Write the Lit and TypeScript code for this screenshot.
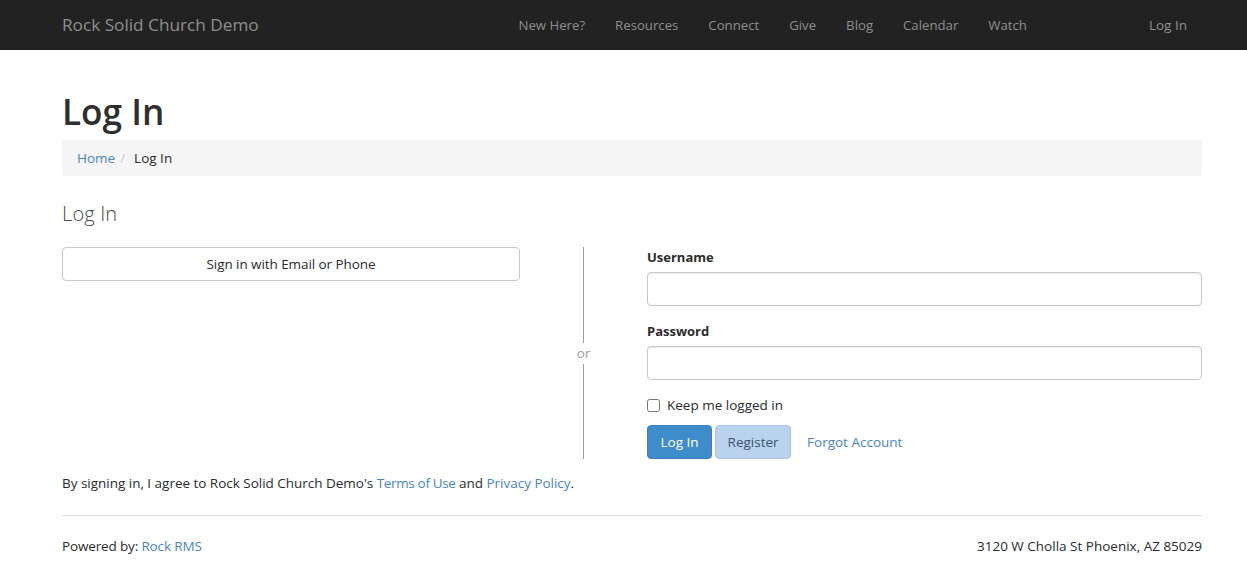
import { css, html, LitElement } from "lit";
import { customElement } from "lit/decorators.js";

const NAV = ["New Here?", "Resources", "Connect", "Give", "Blog", "Calendar", "Watch"];

@customElement("app-root")
export class AppRoot extends LitElement {

    static styles = css`
        :host {
            display: block;
            font-family: "Open Sans", sans-serif;
            font-size: 13.5px;
            line-height: 20px;
            color: #2b2b2b;
            background: #fff;
        }

        a {
            color: #4a84c4;
            text-decoration: none;
        }

        .navbar {
            height: 50px;
            background: #222;
            display: flex;
            align-items: center;
            padding: 0 45px 0 62px;
        }

        .brand {
            font-size: 17.2px;
            color: #8f8f8f;
            flex: 1;
        }

        .nav {
            display: flex;
            gap: 30px;
            font-size: 13.2px;
        }

        .nav a {
            color: #8f8f8f;
        }

        .nav-login {
            color: #8f8f8f;
            margin-left: 122px;
            padding-right: 15px;
        }

        .page {
            padding: 0 45px 0 62px;
        }

        h1 {
            margin: 0;
            padding-top: 39px;
            font-size: 35.2px;
            line-height: 44px;
            font-weight: 600;
            color: #2f2f2f;
        }

        .breadcrumb {
            margin-top: 7px;
            height: 36px;
            background: #f5f5f5;
            border-radius: 4px;
            display: flex;
            align-items: center;
            padding: 0 15px;
        }

        .breadcrumb .sep {
            color: #ccc;
            margin: 0 9px 0 5px;
        }

        h2 {
            margin: 24px 0 0;
            font-size: 20px;
            line-height: 28px;
            font-weight: 300;
            letter-spacing: 0.15px;
            color: #4a4a4a;
        }

        .columns {
            margin-top: 19px;
            display: grid;
            grid-template-columns: 458px 127px 555px;
            height: 212px;
        }

        .sso {
            height: 34px;
            box-sizing: border-box;
            border: 1px solid #c8c8c8;
            border-radius: 4px;
            display: flex;
            align-items: center;
            justify-content: center;
            letter-spacing: -0.07px;
        }

        .divider {
            display: flex;
            flex-direction: column;
            align-items: center;
            color: #9d9d9d;
        }

        .divider i {
            flex: 1;
            width: 1px;
            background: #9d9d9d;
        }

        .divider span {
            padding: 0 0 1px;
            height: 20px;
        }

        label {
            display: block;
            font-size: 13px;
            font-weight: 700;
        }

        .field {
            margin-bottom: 15px;
        }

        .field input {
            display: block;
            box-sizing: border-box;
            width: 100%;
            height: 34px;
            margin-top: 5px;
            border: 1px solid #c8c8c8;
            border-radius: 4px;
            box-shadow: inset 0 1px 1px rgba(0, 0, 0, 0.075);
        }

        .check {
            display: flex;
            align-items: center;
            gap: 7px;
        }

        .check input {
            width: 13px;
            height: 13px;
            margin: 0;
        }

        .actions {
            display: flex;
            align-items: center;
            margin-top: 10px;
        }

        .btn {
            box-sizing: border-box;
            height: 34px;
            display: flex;
            align-items: center;
            padding: 0 12.5px;
            border-radius: 4px;
            border: 1px solid #3a7fc0;
            background: #3f8ccb;
            color: #fff;
            font-weight: 500;
        }

        .btn.secondary {
            margin-left: 3px;
            padding: 0 11.5px;
            background: #bad3ec;
            border-color: #a6c4e2;
            color: #37536f;
            font-weight: 400;
        }

        .forgot {
            margin-left: 16px;
        }

        .terms {
            margin-top: 14px;
            letter-spacing: -0.02px;
        }

        .terms .tight {
            letter-spacing: -0.35px;
        }

        hr {
            margin: 22px 0 0;
            border: 0;
            border-top: 1px solid #e0e0e0;
        }

        footer {
            display: flex;
            justify-content: space-between;
            margin-top: 20px;
            padding-bottom: 20px;
        }

        .powered {
            letter-spacing: -0.15px;
        }
    `;

    protected render() {
        return html`
            <div class="navbar">
                <span class="brand">Rock Solid Church Demo</span>
                <nav class="nav">
                    ${ NAV.map((item) => html`<a href="#">${ item }</a>`) }
                </nav>
                <a class="nav-login" href="#">Log In</a>
            </div>
            <main class="page">
                <h1>Log In</h1>
                <div class="breadcrumb">
                    <a href="#">Home</a><span class="sep">/</span><span>Log In</span>
                </div>
                <h2>Log In</h2>
                <div class="columns">
                    <div><div class="sso">Sign in with Email or Phone</div></div>
                    <div class="divider"><i></i><span>or</span><i></i></div>
                    <div>
                        <div class="field"><label>Username</label><input type="text" /></div>
                        <div class="field"><label>Password</label><input type="password" /></div>
                        <div class="check"><input type="checkbox" /><span>Keep me logged in</span></div>
                        <div class="actions">
                            <a class="btn" href="#">Log In</a>
                            <a class="btn secondary" href="#">Register</a>
                            <a class="forgot" href="#">Forgot Account</a>
                        </div>
                    </div>
                </div>
                <div class="terms">
                    By signing in, I agree to Rock Solid Church Demo's
                    <a class="tight" href="#">Terms of Use</a> and <a href="#">Privacy Policy</a>.
                </div>
                <hr />
                <footer>
                    <span class="powered">Powered by: <a href="#">Rock RMS</a></span>
                    <span>3120 W Cholla St Phoenix, AZ 85029</span>
                </footer>
            </main>
        `;
    }
}
